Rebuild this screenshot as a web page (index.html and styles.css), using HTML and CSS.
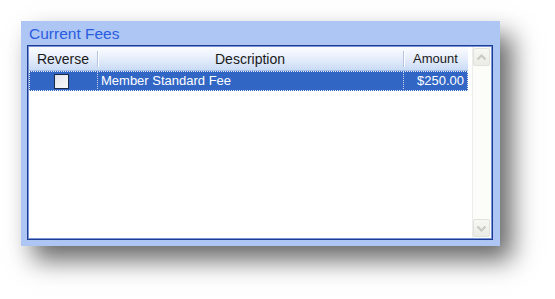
FILE: index.html
```html
<!DOCTYPE html>
<html>
<head>
<meta charset="utf-8">
<link rel="stylesheet" href="styles.css">
</head>
<body>
<div class="panel">
  <div class="title">Current Fees</div>
  <div class="box">
    <div class="grid">
      <div class="header">
        <div class="hcell c-rev">Reverse</div>
        <div class="hcell c-desc">Description</div>
        <div class="hcell c-amt">Amount</div>
      </div>
      <div class="row selected">
        <div class="cell c-rev"><span class="check"></span></div>
        <div class="cell c-desc">Member Standard Fee</div>
        <div class="cell c-amt">$250.00</div>
      </div>
    </div>
    <div class="scrollbar">
      <div class="sbtn">
        <svg width="11" height="7" viewBox="0 0 11 7"><path d="M1.5 5.5 L5.5 1.5 L9.5 5.5" fill="none" stroke="#c9c9c2" stroke-width="2"/></svg>
      </div>
      <div class="track"></div>
      <div class="sbtn">
        <svg width="11" height="7" viewBox="0 0 11 7"><path d="M1.5 1.5 L5.5 5.5 L9.5 1.5" fill="none" stroke="#c9c9c2" stroke-width="2"/></svg>
      </div>
    </div>
  </div>
</div>
</body>
</html>
```
FILE: styles.css
```css
html, body {
  margin: 0;
  padding: 0;
  background: #ffffff;
}
body {
  width: 555px;
  height: 299px;
  overflow: hidden;
  font-family: "Liberation Sans", Arial, sans-serif;
}
.panel {
  margin: 21px 0 0 21px;
  width: 479px;
  height: 225px;
  box-sizing: border-box;
  background: #adc6f4;
  padding: 0 7px 6px 6px;
  display: flex;
  flex-direction: column;
  box-shadow: 12px 14px 24px rgba(0, 0, 0, 0.6);
}
.title {
  height: 24px;
  line-height: 26px;
  padding-left: 2px;
  font-size: 15.5px;
  color: #2b5ce0;
}
.box {
  flex: 1;
  display: flex;
  background: #ffffff;
  border: 1px solid #1f3c94;
  box-shadow: inset 0 0 0 1px #7893d4;
  padding: 1px;
}
.grid {
  flex: 1;
  display: flex;
  flex-direction: column;
  padding-right: 4px;
}
.header {
  display: flex;
  height: 24px;
  background: linear-gradient(#fbfcfe, #e6eefb 50%, #c9dbf6);
  border-bottom: 1px solid #a9bfe6;
  box-sizing: border-box;
}
.hcell {
  font-size: 14px;
  color: #1a1a1a;
  line-height: 24px;
  text-align: center;
  position: relative;
}
.hcell + .hcell::before {
  content: "";
  position: absolute;
  left: 0;
  top: 4px;
  bottom: 3px;
  width: 2px;
  background: linear-gradient(90deg, #b4c4dc 50%, #ffffff 50%);
}
.c-rev { width: 68px; }
.c-desc { width: 306px; }
.c-amt { flex: 1; }
.header .c-amt { text-align: center; font-size: 13px; }
.row {
  display: flex;
  height: 20px;
}
.row.selected {
  background: #3166c5;
  color: #ffffff;
  outline: 1px dotted #e9eefa;
  outline-offset: -1px;
}
.cell {
  font-size: 13px;
  line-height: 20px;
  position: relative;
}
.cell + .cell::before {
  content: "";
  position: absolute;
  left: 0;
  top: 0;
  bottom: 0;
  border-left: 1px dotted #c8d4ef;
}
.row .c-rev {
  display: flex;
  align-items: center;
  justify-content: center;
}
.row .c-desc { padding-left: 4px; box-sizing: border-box; }
.row .c-amt { text-align: right; padding-right: 4px; }
.check {
  width: 13px;
  height: 13px;
  border: 1px solid #1c2a4a;
  background: linear-gradient(135deg, #dfe3ea, #fbfbfd);
  margin-left: -3px;
}
.scrollbar {
  width: 19px;
  background: #fcfcf9;
  border-left: 1px solid #ececec;
  box-sizing: border-box;
  display: flex;
  flex-direction: column;
  align-items: flex-end;
  padding: 1px 1px 1px 0;
}
.sbtn {
  width: 17px;
  height: 18px;
  box-sizing: border-box;
  border: 1px solid #e2e2dc;
  border-radius: 2px;
  background: linear-gradient(#f7f7f3, #ecece6);
  display: flex;
  align-items: center;
  justify-content: center;
}
.track { flex: 1; }
```
